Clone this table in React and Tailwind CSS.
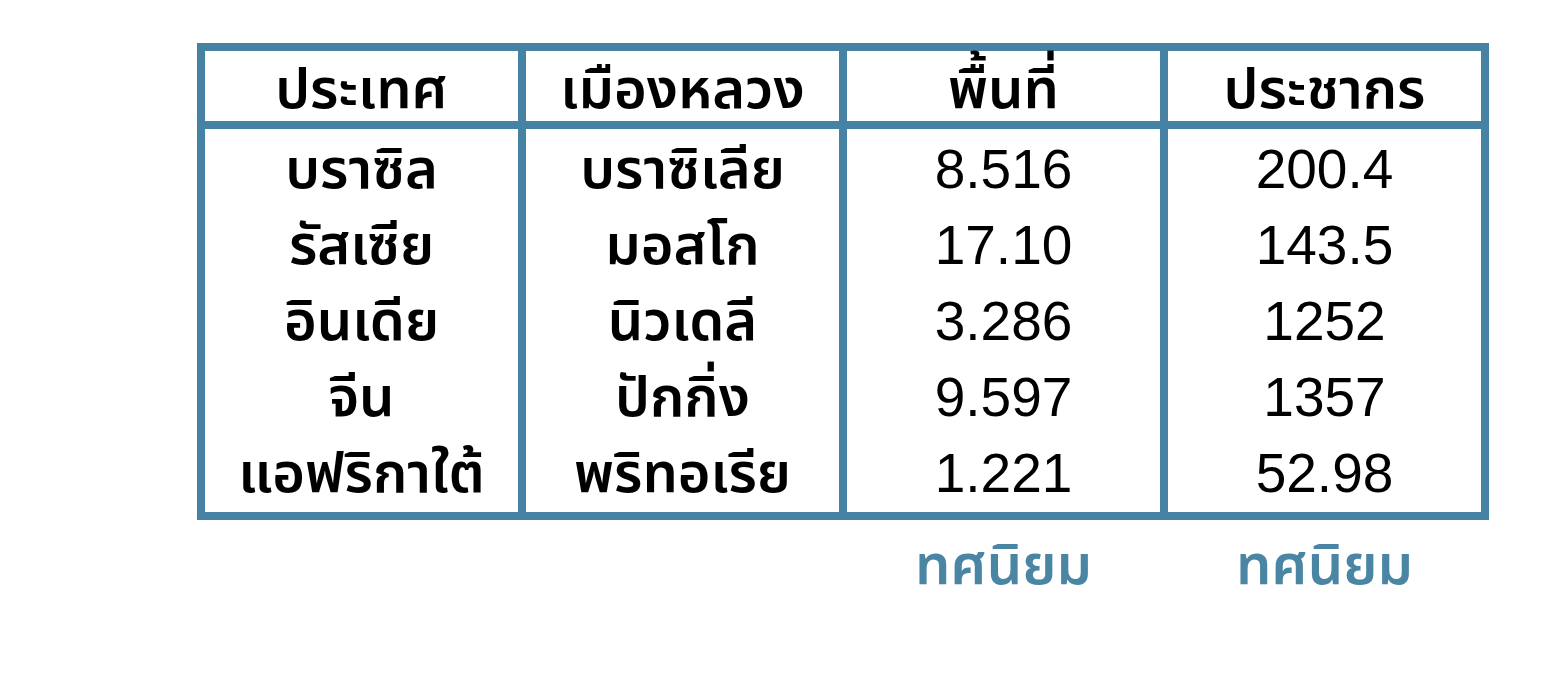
const HEADERS = ['ประเทศ', 'เมืองหลวง', 'พื้นที่', 'ประชากร'];
const ROWS = [
  ['บราซิล', 'บราซิเลีย', '8.516', '200.4'],
  ['รัสเซีย', 'มอสโก', '17.10', '143.5'],
  ['อินเดีย', 'นิวเดลี', '3.286', '1252'],
  ['จีน', 'ปักกิ่ง', '9.597', '1357'],
  ['แอฟริกาใต้', 'พริทอเรีย', '1.221', '52.98'],
];

const thai = "font-['Noto_Sans_Thai','Noto_Sans','DejaVu_Sans',sans-serif] font-semibold";
const num = "font-['Liberation_Sans',Arial,sans-serif]";

export default function App() {
  return (
    <div className="w-[1564px] h-[688px] bg-white overflow-hidden">
      <div className="ml-[197px] mt-[43px] w-[1292px]">
        <div className="grid grid-cols-4 grid-rows-[70px_383px] gap-2 p-2 bg-[#4682a4]">
          {HEADERS.map(h => (
            <div key={h} className={`bg-white flex items-center justify-center pt-[10px] text-[56px] text-black ${thai}`}>
              {h}
            </div>
          ))}
          {[0, 1, 2, 3].map(col => (
            <div key={col} className="bg-white flex flex-col pt-[2px]">
              {ROWS.map(row => (
                <div
                  key={row[0]}
                  className={`h-[76px] flex items-center justify-center text-black ${col < 2 ? `text-[56px] pt-[4px] ${thai}` : `text-[55px] ${num}`}`}
                >
                  {row[col]}
                </div>
              ))}
            </div>
          ))}
        </div>
        <div className="grid grid-cols-4 gap-2 px-2 mt-[12px]">
          <div />
          <div />
          <div className={`text-center text-[56px] leading-[70px] text-[#4a86a4] ${thai}`}>ทศนิยม</div>
          <div className={`text-center text-[56px] leading-[70px] text-[#4a86a4] ${thai}`}>ทศนิยม</div>
        </div>
      </div>
    </div>
  );
}
